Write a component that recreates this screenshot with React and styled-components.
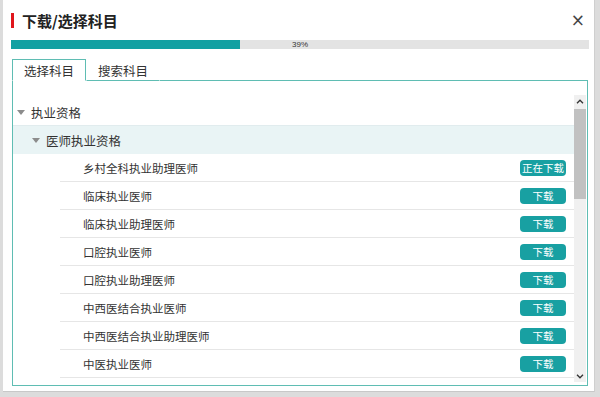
import React from "react";
import styled, { createGlobalStyle } from "styled-components";

const GlobalStyle = createGlobalStyle`
	html, body {
		margin: 0;
		padding: 0;
		background: #dcdcdc;
		font-family: "Noto Sans CJK SC", "Liberation Sans", sans-serif;
	}
`;

const subjects = [
	{ name: "乡村全科执业助理医师", status: "正在下载" },
	{ name: "临床执业医师", status: "下载" },
	{ name: "临床执业助理医师", status: "下载" },
	{ name: "口腔执业医师", status: "下载" },
	{ name: "口腔执业助理医师", status: "下载" },
	{ name: "中西医结合执业医师", status: "下载" },
	{ name: "中西医结合执业助理医师", status: "下载" },
	{ name: "中医执业医师", status: "下载" },
];

export default function App() {
	return (
		<>
			<GlobalStyle />
			<Dialog>
				<TitleBar>
					<Title>下载/选择科目</Title>
					<Close>×</Close>
				</TitleBar>
				<Progress>
					<ProgressFill style={{ width: "39.7%" }} />
					<ProgressText>39%</ProgressText>
				</Progress>
				<Tabs>
					<Tab active>选择科目</Tab>
					<Tab>搜索科目</Tab>
					<TabFiller />
				</Tabs>
				<Panel>
					<List>
						<GroupRow>
							<Caret />
							执业资格
						</GroupRow>
						<SubGroupRow>
							<Caret />
							医师执业资格
						</SubGroupRow>
						{subjects.map((s) => (
							<ItemRow key={s.name}>
								<ItemName>{s.name}</ItemName>
								<DownloadButton>{s.status}</DownloadButton>
							</ItemRow>
						))}
					</List>
					<Scrollbar>
						<ScrollArrow>
							<svg width="8" height="5" viewBox="0 0 8 5">
								<path d="M1 4.2 L4 1.2 L7 4.2" fill="none" stroke="#333" strokeWidth="1.3" />
							</svg>
						</ScrollArrow>
						<Track>
							<Thumb />
						</Track>
						<ScrollArrow>
							<svg width="8" height="5" viewBox="0 0 8 5">
								<path d="M1 0.8 L4 3.8 L7 0.8" fill="none" stroke="#333" strokeWidth="1.3" />
							</svg>
						</ScrollArrow>
					</Scrollbar>
				</Panel>
			</Dialog>
		</>
	);
}

const Dialog = styled.div`
	box-sizing: border-box;
	width: 592px;
	height: 392px;
	margin-left: 3px;
	background: #fff;
	border-right: 1px solid #cfcfcf;
	border-bottom: 1px solid #c8c8c8;
	padding: 0 5px 0 8px;
	display: flex;
	flex-direction: column;
`;

const TitleBar = styled.div`
	height: 40px;
	display: flex;
	align-items: center;
	justify-content: space-between;
`;

const Title = styled.h1`
	margin: 0;
	font-size: 15px;
	font-weight: bold;
	color: #222;
	display: flex;
	align-items: center;
	&::before {
		content: "";
		display: block;
		width: 3px;
		height: 15px;
		background: #e0161c;
		margin-right: 8px;
	}
`;

const Close = styled.span`
	font-family: "DejaVu Sans", sans-serif;
	font-size: 17px;
	color: #444;
	margin-right: 4px;
	line-height: 1;
`;

const Progress = styled.div`
	position: relative;
	height: 9px;
	background: #e3e3e3;
	display: flex;
`;

const ProgressFill = styled.div`
	background: #12a0a2;
	height: 100%;
`;

const ProgressText = styled.span`
	position: absolute;
	inset: 0;
	text-align: center;
	font-family: "Liberation Sans", sans-serif;
	font-size: 8px;
	line-height: 9px;
	color: #333;
`;

const Tabs = styled.div`
	display: flex;
	margin-top: 10px;
	padding-left: 1px;
	margin-right: 1px;
`;

const Tab = styled.div`
	box-sizing: border-box;
	width: 74px;
	height: 22px;
	font-size: 12.5px;
	line-height: 21px;
	text-align: center;
	color: #333;
	background: #fff;
	border: 1px solid ${(p) => (p.active ? "#5fbdb3" : "transparent")};
	border-bottom: ${(p) => (p.active ? "1px solid #fff" : "1px solid #5fbdb3")};
`;

const TabFiller = styled.div`
	flex: 1;
	border-bottom: 1px solid #5fbdb3;
`;

const Panel = styled.div`
	box-sizing: border-box;
	height: 305px;
	margin: 0 1px 0 1px;
	border: 1px solid #5fbdb3;
	border-top: none;
	padding: 14px 1px 3px 0;
	display: flex;
`;

const List = styled.div`
	flex: 1;
	overflow: hidden;
	padding-top: 4px;
`;

const Caret = styled.span`
	width: 0;
	height: 0;
	border-left: 4px solid transparent;
	border-right: 4px solid transparent;
	border-top: 5px solid #8c8c8c;
	margin-right: 6px;
`;

const GroupRow = styled.div`
	box-sizing: border-box;
	height: 27px;
	display: flex;
	align-items: center;
	padding-left: 4px;
	font-size: 12.5px;
	color: #333;
	border-bottom: 1px solid #e1ecee;
`;

const SubGroupRow = styled(GroupRow)`
	height: 28px;
	padding-left: 19px;
	background: #e9f4f5;
	border-bottom: none;
`;

const ItemRow = styled.div`
	box-sizing: border-box;
	height: 28px;
	margin-left: 47px;
	padding: 0 8px 0 23px;
	display: flex;
	align-items: center;
	justify-content: space-between;
	border-bottom: 1px solid #e6e6e6;
`;

const ItemName = styled.span`
	font-size: 11.5px;
	color: #333;
`;

const DownloadButton = styled.button`
	width: 46px;
	height: 16px;
	padding: 0;
	border: none;
	border-radius: 4px;
	background: #18a0a2;
	color: #fff;
	font-family: "Noto Sans CJK SC", sans-serif;
	font-size: 10.5px;
	line-height: 16px;
`;

const Scrollbar = styled.div`
	width: 12px;
	display: flex;
	flex-direction: column;
	background: #f0f0f0;
`;

const ScrollArrow = styled.div`
	height: 12px;
	display: flex;
	align-items: center;
	justify-content: center;
`;

const Track = styled.div`
	flex: 1;
	display: flex;
	flex-direction: column;
`;

const Thumb = styled.div`
	height: 90px;
	background: #c1c1c1;
	margin: 2px 0 0;
`;
